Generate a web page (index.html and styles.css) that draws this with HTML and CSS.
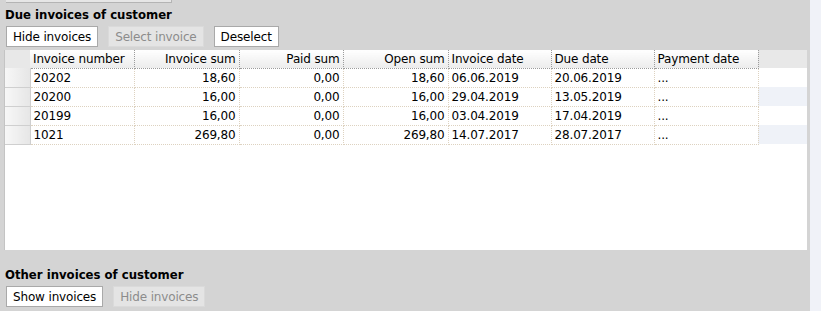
FILE: index.html
```html
<!DOCTYPE html>
<html lang="en">
<head>
    <meta charset="UTF-8">
    <title>Invoices of customer</title>
    <link rel="stylesheet" href="styles.css">
</head>
<body>
<div class="page">
    <div class="main">
        <div class="top-edge"></div>

        <h3 class="title">Due invoices of customer</h3>
        <div class="buttons">
            <button class="btn">Hide invoices</button>
            <button class="btn" disabled>Select invoice</button>
            <button class="btn">Deselect</button>
        </div>

        <div class="grid">
            <table>
                <colgroup>
                    <col class="c-head">
                    <col class="c-num">
                    <col class="c-sum">
                    <col class="c-sum2">
                    <col class="c-sum">
                    <col class="c-date">
                    <col class="c-date">
                    <col class="c-sum2">
                    <col>
                </colgroup>
                <thead>
                <tr>
                    <th class="corner"></th>
                    <th>Invoice number</th>
                    <th class="num">Invoice sum</th>
                    <th class="num">Paid sum</th>
                    <th class="num">Open sum</th>
                    <th>Invoice date</th>
                    <th>Due date</th>
                    <th>Payment date</th>
                    <th class="fill"></th>
                </tr>
                </thead>
                <tbody>
                <tr>
                    <td class="rowhead"></td>
                    <td>20202</td>
                    <td class="num">18,60</td>
                    <td class="num">0,00</td>
                    <td class="num">18,60</td>
                    <td>06.06.2019</td>
                    <td>20.06.2019</td>
                    <td>...</td>
                    <td class="fill"></td>
                </tr>
                <tr class="alt">
                    <td class="rowhead"></td>
                    <td>20200</td>
                    <td class="num">16,00</td>
                    <td class="num">0,00</td>
                    <td class="num">16,00</td>
                    <td>29.04.2019</td>
                    <td>13.05.2019</td>
                    <td>...</td>
                    <td class="fill"></td>
                </tr>
                <tr>
                    <td class="rowhead"></td>
                    <td>20199</td>
                    <td class="num">16,00</td>
                    <td class="num">0,00</td>
                    <td class="num">16,00</td>
                    <td>03.04.2019</td>
                    <td>17.04.2019</td>
                    <td>...</td>
                    <td class="fill"></td>
                </tr>
                <tr class="alt">
                    <td class="rowhead"></td>
                    <td>1021</td>
                    <td class="num">269,80</td>
                    <td class="num">0,00</td>
                    <td class="num">269,80</td>
                    <td>14.07.2017</td>
                    <td>28.07.2017</td>
                    <td>...</td>
                    <td class="fill"></td>
                </tr>
                </tbody>
            </table>
        </div>

        <h3 class="title second">Other invoices of customer</h3>
        <div class="buttons">
            <button class="btn">Show invoices</button>
            <button class="btn" disabled>Hide invoices</button>
        </div>
    </div>
    <div class="side"></div>
</div>
</body>
</html>
```

FILE: styles.css
```css
*{
    margin: 0;
    padding: 0;
    box-sizing: border-box;
}
html,body{
    width: 100%;
    height: 100%;
}
body{
    font-family: "DejaVu Sans", Verdana, sans-serif;
    font-size: 12px;
    letter-spacing: -0.15px;
    color: #000;
    background-color: #f0f2f8;
}
.page{
    display: flex;
    height: 100%;
}
.main{
    width: 810px;
    height: 100%;
    background-color: #d4d4d4;
    padding: 0 3px 0 4px;
}
.side{
    flex: 1;
    background-color: #f0f2f8;
}
.top-edge{
    width: 166px;
    height: 3px;
    margin-left: 2px;
    background-color: #e6e6e6;
    border-bottom: 1px solid #b4b4b4;
    border-right: 1px solid #b4b4b4;
}
.title{
    font-family: "DejaVu Sans Condensed", "DejaVu Sans", sans-serif;
    font-stretch: condensed;
    font-size: 13px;
    font-weight: bold;
    letter-spacing: 0;
    line-height: 16px;
    margin: 4px 0 0 1px;
}
.second{
    margin-top: 17px;
}
.buttons{
    display: flex;
    gap: 10px;
    margin: 3px 0 0 2px;
}
.btn{
    height: 21px;
    padding: 0 6px;
    font-family: inherit;
    font-size: 12px;
    letter-spacing: -0.15px;
    color: #000;
    background-color: #fff;
    border: 1px solid #a9a9a9;
    border-radius: 0;
}
.btn:disabled{
    color: #8c8c8c;
    background-color: #e4e4e4;
    border-color: #dadada;
}
.grid{
    margin-top: 3px;
    height: 200px;
    background-color: #fff;
    border-left: 1px solid #c4c4c4;
}
.grid table{
    width: 100%;
    table-layout: fixed;
    border-collapse: collapse;
}
.c-head{ width: 25px; }
.c-num{ width: 104px; }
.c-sum{ width: 105px; }
.c-sum2{ width: 104px; }
.c-date{ width: 103px; }
th{
    height: 18px;
    padding: 0 3px;
    font-weight: normal;
    text-align: left;
    white-space: nowrap;
    background: linear-gradient(#ffffff, #ececec);
    border-right: 1px dotted #9c9c9c;
    border-bottom: 1px dotted #9c9c9c;
}
th.num, td.num{
    text-align: right;
}
th.corner{
    background: #e8e8e8;
    border-right: none;
    border-bottom: none;
}
th.fill{
    background: #e8e8e8;
    border: none;
}
td{
    height: 19px;
    padding: 0 3px;
    white-space: nowrap;
    border-right: 1px dotted #ddd2c0;
    border-bottom: 1px dotted #ddd2c0;
}
td.rowhead{
    background: linear-gradient(90deg, #f7f7f7, #e6e6e6);
    border-right: 1px solid #cfcfcf;
    border-bottom: 1px solid #cfcfcf;
}
td.fill{
    border: none;
}
.alt td.fill{
    background-color: #eff2f8;
}
```
